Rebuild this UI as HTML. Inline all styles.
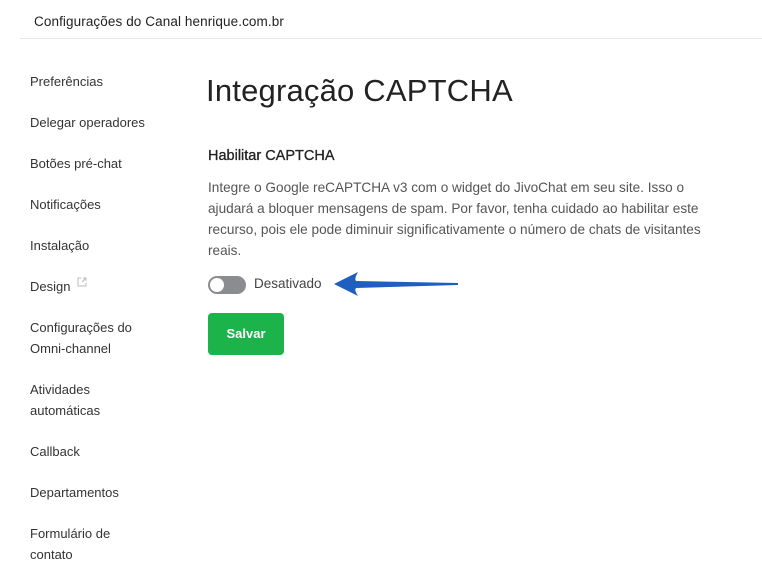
<!DOCTYPE html>
<html><head><meta charset="utf-8"><style>
body{margin:0;width:762px;height:577px;background:#fff;font-family:"Liberation Sans",sans-serif;position:relative;overflow:hidden;color:#333}
.hdr{position:absolute;left:34px;top:14px;font-size:13.5px;color:#222;font-weight:normal;letter-spacing:0.1px}
.line{position:absolute;left:20px;right:0;top:38px;border-top:1px solid #e8e8e8}
.nav{position:absolute;left:30px;font-size:13px;color:#333;line-height:21px}
h1{position:absolute;left:206px;top:73px;margin:0;font-size:31px;font-weight:normal;color:#222;letter-spacing:0.2px}
h2{position:absolute;left:208px;top:148px;margin:0;font-size:14.5px;font-weight:normal;color:#222;-webkit-text-stroke:0.3px #222}
p{position:absolute;left:208px;top:177px;margin:0;width:512px;font-size:13.6px;line-height:21px;color:#555}
.tog{position:absolute;left:208px;top:276px;width:38px;height:18px;border-radius:9px;background:#8a8c90}
.tog:after{content:"";position:absolute;left:2px;top:2px;width:14px;height:14px;border-radius:50%;background:#fff}
.lbl{position:absolute;left:254px;top:276px;font-size:13.5px;color:#444}
.btn{position:absolute;left:208px;top:313px;width:76px;height:42px;border-radius:4px;background:#1bb34a;color:#fff;font-weight:bold;font-size:13px;line-height:42px;text-align:center}
</style></head><body>
<div class="hdr">Configurações do Canal henrique.com.br</div>
<div class="line"></div>
<div class="nav" style="top:71px">Preferências</div>
<div class="nav" style="top:112px">Delegar operadores</div>
<div class="nav" style="top:153px">Botões pré-chat</div>
<div class="nav" style="top:194px">Notificações</div>
<div class="nav" style="top:235px">Instalação</div>
<div class="nav" style="top:276px">Design <svg width="10" height="10" viewBox="0 0 10 10" style="vertical-align:4px;margin-left:3px"><path d="M4 1H1v8h8V6M6 1h3v3M9 1L5 5" stroke="#bbb" fill="none" stroke-width="1"/></svg></div>
<div class="nav" style="top:317px">Configurações do<br>Omni-channel</div>
<div class="nav" style="top:379px">Atividades<br>automáticas</div>
<div class="nav" style="top:441px">Callback</div>
<div class="nav" style="top:482px">Departamentos</div>
<div class="nav" style="top:523px">Formulário de<br>contato</div>
<h1>Integração CAPTCHA</h1>
<h2>Habilitar CAPTCHA</h2>
<p>Integre o Google reCAPTCHA v3 com o widget do JivoChat em seu site. Isso o ajudará a bloquer mensagens de spam. Por favor, tenha cuidado ao habilitar este recurso, pois ele pode diminuir significativamente o número de chats de visitantes reais.</p>
<div class="tog"></div>
<div class="lbl">Desativado</div>
<svg style="position:absolute;left:330px;top:268px" width="132" height="30" viewBox="0 0 132 30"><path d="M4 16 L28 4 Q24 11 26 13 L128 15 L128 17 L26 20 Q24 22 28 28 Z" fill="#1f5fbf"/></svg>
<div class="btn">Salvar</div>
</body></html>
